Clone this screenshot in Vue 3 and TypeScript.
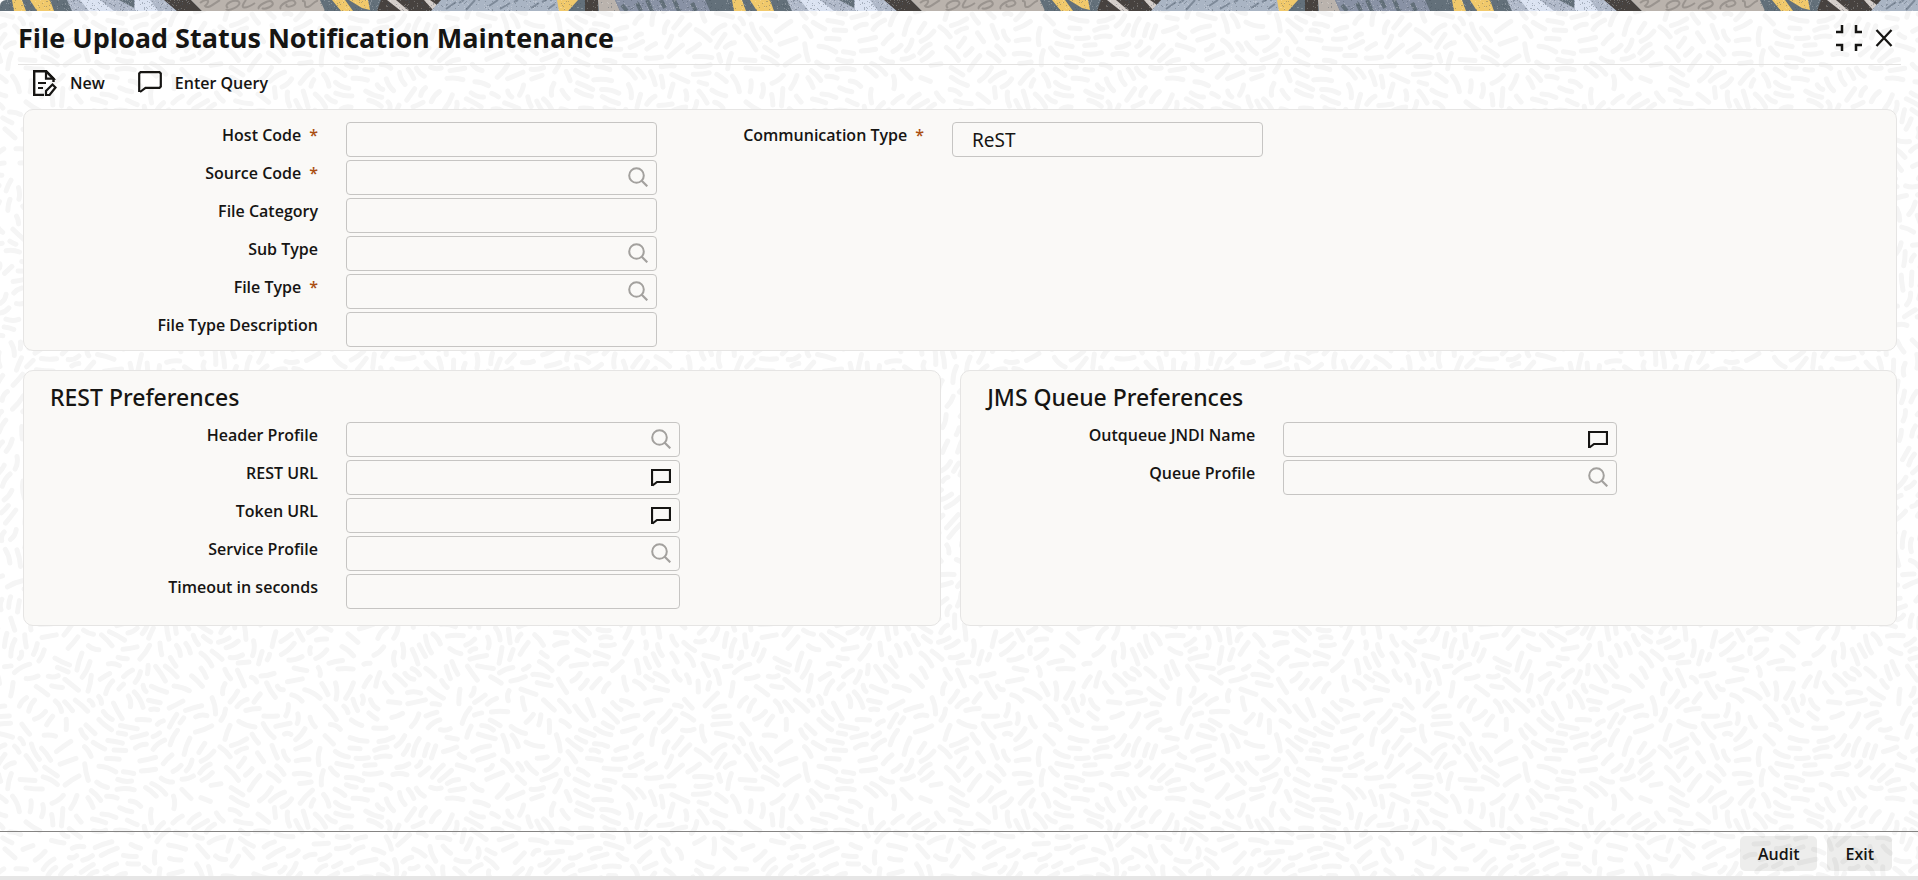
<script setup lang="ts">
import { ref } from 'vue'

type Icon = 'search' | 'comment' | null

interface Field {
  id: string
  label: string
  required?: boolean
  icon: Icon
}

const generalFields: Field[] = [
  { id: 'host-code', label: 'Host Code', required: true, icon: null },
  { id: 'source-code', label: 'Source Code', required: true, icon: 'search' },
  { id: 'file-category', label: 'File Category', icon: null },
  { id: 'sub-type', label: 'Sub Type', icon: 'search' },
  { id: 'file-type', label: 'File Type', required: true, icon: 'search' },
  { id: 'file-type-description', label: 'File Type Description', icon: null },
]

const communicationFields: Field[] = [
  { id: 'communication-type', label: 'Communication Type', required: true, icon: null },
]

const restFields: Field[] = [
  { id: 'header-profile', label: 'Header Profile', icon: 'search' },
  { id: 'rest-url', label: 'REST URL', icon: 'comment' },
  { id: 'token-url', label: 'Token URL', icon: 'comment' },
  { id: 'service-profile', label: 'Service Profile', icon: 'search' },
  { id: 'timeout', label: 'Timeout in seconds', icon: null },
]

const jmsFields: Field[] = [
  { id: 'outqueue', label: 'Outqueue JNDI Name', icon: 'comment' },
  { id: 'queue-profile', label: 'Queue Profile', icon: 'search' },
]

const headColumns: Field[][] = [generalFields, communicationFields]
const groups = [
  { title: 'REST Preferences', fields: restFields },
  { title: 'JMS Queue Preferences', fields: jmsFields },
]

const values = ref<Record<string, string>>({ 'communication-type': 'ReST' })

function random(seed: number): () => number {
  let s = seed
  return () => {
    s = (s * 1664525 + 1013904223) % 4294967296
    return s / 4294967296
  }
}

// Brush strokes following a periodic flow field, so that the tile repeats seamlessly.
// A stroke is dropped when it comes too close to one that is already placed.
const TILE = 720
const BUCKET = 8
const GAP = 7
function strokes(): string {
  const next = random(11)
  const cells = TILE / BUCKET
  const buckets = new Map<number, [number, number][]>()
  const wrap = (v: number, size: number): number => ((v % size) + size) % size
  const k = (2 * Math.PI) / TILE
  const parts: string[] = []
  const angleAt = (x: number, y: number): number =>
    1.3 * Math.sin(k * (3 * x + 2 * y)) +
    1.2 * Math.cos(k * (4 * y - 3 * x)) +
    0.9 * Math.sin(k * (6 * x - 3 * y) + 1) +
    1.1
  const isFree = (x: number, y: number): boolean => {
    const cx = Math.floor(x / BUCKET)
    const cy = Math.floor(y / BUCKET)
    for (let i = -1; i <= 1; i++) {
      for (let j = -1; j <= 1; j++) {
        const bucket = buckets.get(wrap(cx + i, cells) * cells + wrap(cy + j, cells))
        if (!bucket) continue
        for (const [px, py] of bucket) {
          const dx = Math.abs(px - x)
          const dy = Math.abs(py - y)
          if (Math.hypot(Math.min(dx, TILE - dx), Math.min(dy, TILE - dy)) < GAP) return false
        }
      }
    }
    return true
  }
  for (let n = 0; n < 50000; n++) {
    const x = next() * TILE
    const y = next() * TILE
    const a = angleAt(x, y) + (next() - 0.5) * 0.3
    const half = n < 30000 ? 5 + next() * 4 : 3 + next() * 2
    const bend = (next() - 0.5) * 5
    const dx = Math.cos(a) * half
    const dy = Math.sin(a) * half
    const points = [-1, -0.5, 0, 0.5, 1].map(
      (t): [number, number] => [wrap(x + dx * t, TILE), wrap(y + dy * t, TILE)],
    )
    if (!points.every(([px, py]) => isFree(px, py))) continue
    for (const point of points) {
      const key = Math.floor(point[0] / BUCKET) * cells + Math.floor(point[1] / BUCKET)
      const bucket = buckets.get(key)
      if (bucket) bucket.push(point)
      else buckets.set(key, [point])
    }
    const bx = -Math.sin(a) * bend
    const by = Math.cos(a) * bend
    const xs = x < 12 ? [x, x + TILE] : x > TILE - 12 ? [x, x - TILE] : [x]
    const ys = y < 12 ? [y, y + TILE] : y > TILE - 12 ? [y, y - TILE] : [y]
    for (const px of xs) {
      for (const py of ys) {
        parts.push(
          `M${(px - dx).toFixed(1)} ${(py - dy).toFixed(1)}q${(dx + bx).toFixed(1)} ${(dy + by).toFixed(1)} ${(2 * dx).toFixed(1)} ${(2 * dy).toFixed(1)}`,
        )
      }
    }
  }
  return parts.join('')
}

function speckles(seed: number, amount: number): string {
  const next = random(seed)
  let d = ''
  for (let i = 0; i < amount; i++) {
    let x = Math.floor(next() * 720)
    if (x > 190 && x < 320) x -= 130
    d += `M${x} ${Math.floor(next() * 11)}h1v1h-1z`
  }
  return d
}

const strokePath = strokes()
const darkSpeckles = speckles(5, 420)
const lightSpeckles = speckles(29, 420)
</script>

<template>
  <main class="screen">
    <svg class="texture" aria-hidden="true">
      <defs>
        <pattern id="strokes" width="720" height="720" patternUnits="userSpaceOnUse">
          <path :d="strokePath" fill="none" stroke="#f5f5f5" stroke-width="5" stroke-linecap="round" />
        </pattern>
      </defs>
      <rect width="100%" height="100%" fill="url(#strokes)" />
    </svg>

    <svg class="banner" aria-hidden="true">
      <defs>
        <pattern id="banner-art" width="720" height="11" patternUnits="userSpaceOnUse">
          <rect width="720" height="11" fill="#63707a" />
          <path d="M12 0H22L26 11H14ZM30 0H50L54 11H37ZM332 0H345L353 11H341ZM349 0H368L370 10L362 8ZM556 0H578L568 11H558Z" fill="#f1c96b" />
          <path d="M67 0H165L177 11H72Z" fill="#b0b9c9" />
          <path d="M80 0H100L114 11H89ZM135 0H150L158 11H135Z" fill="#dbe3f2" />
          <path d="M119 0H134V8Z" fill="#63707a" />
          <path d="M164 0H191L202 11H177ZM381 0H442L432 11H377ZM585 0H598V11H585Z" fill="#47423f" />
          <path d="M191 0H320L325 11H202ZM598 0H615L620 11H599Z" fill="#bab3ad" />
          <path d="M387 0H396L409 11H401ZM424 0H430L437 5L433 10Z" fill="#d3cdc9" />
          <path d="M441 0H557L559 11H431Z" fill="#aab5c4" />
          <path d="M615 0H705L710 11H620Z" fill="#8992a5" />
          <path d="M622 5L627 11M637 3L641 11M647 0L652 11M661 0L665 8M674 0L679 11M692 3L696 11" fill="none" stroke="#63707a" stroke-width="4" />
          <path
            d="M200 3C206 -2 212 0 205 6C208 10 216 2 220 0M228 8C222 4 236 -2 239 2C242 6 228 12 226 9M246 0C238 10 246 9 255 3M259 9C256 6 270 -1 272 2C276 6 264 10 262 8M281 9C277 6 292 -3 295 2C298 6 283 9 287 4M302 1C308 0 302 8 308 7C312 6 315 0 318 1"
            fill="none"
            stroke="#9a948f"
            stroke-width="2"
          />
          <path d="M446 9L456 2M464 0L459 3M466 10L475 0M489 6L498 0M500 9L510 3M514 2L518 0M531 8L539 3M546 0L542 2M548 9L555 4" stroke="#7e8a99" stroke-width="2" />
          <path :d="darkSpeckles" fill="#46535e" fill-opacity="0.35" />
          <path :d="lightSpeckles" fill="#ffffff" fill-opacity="0.22" />
        </pattern>
      </defs>
      <rect width="100%" height="11" fill="url(#banner-art)" />
    </svg>

    <header class="title-bar">
      <h1>File Upload Status Notification Maintenance</h1>
      <div class="window-actions">
        <button type="button" class="icon-button" aria-label="Restore">
          <svg width="26" height="26" viewBox="0 0 26 26">
            <path d="M0 7H6V0M20 0V7H26M0 20H6V26M20 26V20H26" fill="none" stroke="#161513" stroke-width="2.5" />
          </svg>
        </button>
        <button type="button" class="icon-button" aria-label="Close">
          <svg width="18" height="18" viewBox="0 0 18 18">
            <path d="M1.500 1L16.500 17M16.500 1L1.500 17" fill="none" stroke="#161513" stroke-width="2.3" />
          </svg>
        </button>
      </div>
    </header>

    <nav class="toolbar" aria-label="Actions">
      <button type="button" class="tool">
        <svg width="24" height="26" viewBox="0 0 24 26">
          <path d="M11 25H1.200V1.200H13L20.500 8.700V12" fill="none" stroke="#161513" stroke-width="2.400" />
          <path d="M13 1V8.700H20.500Z" fill="none" stroke="#161513" stroke-width="2.2" />
          <path d="M5 13H13M5 18H10" stroke="#161513" stroke-width="2" />
          <path d="M13 25V21L19.500 14.500L22.500 17.500L16.500 25Z" fill="none" stroke="#161513" stroke-width="2.2" />
        </svg>
        <span>New</span>
      </button>
      <button type="button" class="tool">
        <svg width="24" height="26" viewBox="0 0 24 26">
          <path d="M1.200 22V3.500L2.500 2.200H21.500L22.800 3.500V16.500L21.500 17.800H7.500L2 22" fill="none" stroke="#161513" stroke-width="2.2" />
        </svg>
        <span>Enter Query</span>
      </button>
    </nav>

    <div class="content">
      <section class="panel head-panel">
        <div v-for="(column, index) in headColumns" :key="index" class="head-column">
          <div v-for="field in column" :key="field.id" class="field">
            <label :for="field.id">{{ field.label }}<span v-if="field.required" class="star">*</span></label>
            <div class="control">
              <input :id="field.id" v-model="values[field.id]" type="text" :class="{ 'with-icon': field.icon }" />
              <button v-if="field.icon" type="button" class="lookup" :aria-label="'Look up ' + field.label">
                <svg width="20" height="20" viewBox="0 0 20 20">
                  <circle cx="8.500" cy="8.500" r="7.300" fill="none" stroke="#a3a19e" stroke-width="2" />
                  <path d="M13.500 13.500L19.300 19.300" stroke="#a3a19e" stroke-width="2.2" />
                </svg>
              </button>
            </div>
          </div>
        </div>
      </section>

      <div class="groups">
        <section v-for="group in groups" :key="group.title" class="panel group">
          <h2>{{ group.title }}</h2>
          <div v-for="field in group.fields" :key="field.id" class="field">
            <label :for="field.id">{{ field.label }}</label>
            <div class="control">
              <input :id="field.id" v-model="values[field.id]" type="text" :class="{ 'with-icon': field.icon }" />
              <button v-if="field.icon === 'search'" type="button" class="lookup" :aria-label="'Look up ' + field.label">
                <svg width="20" height="20" viewBox="0 0 20 20">
                  <circle cx="8.500" cy="8.500" r="7.300" fill="none" stroke="#a3a19e" stroke-width="2" />
                  <path d="M13.500 13.500L19.300 19.300" stroke="#a3a19e" stroke-width="2.2" />
                </svg>
              </button>
              <button v-else-if="field.icon === 'comment'" type="button" class="lookup" :aria-label="'Expand ' + field.label">
                <svg width="20" height="20" viewBox="0 0 20 20">
                  <path d="M1 19V3H19V15H6L1.500 18.500" fill="none" stroke="#161513" stroke-width="2.2" />
                </svg>
              </button>
            </div>
          </div>
        </section>
      </div>
    </div>

    <footer class="footer">
      <button type="button" class="action">Audit</button>
      <button type="button" class="action">Exit</button>
    </footer>
  </main>
</template>

<style>
body {
  background: #ffffff;
}
</style>

<style scoped>
.screen {
  position: relative;
  isolation: isolate;
  display: flex;
  flex-direction: column;
  min-height: 100vh;
  box-sizing: border-box;
  border-bottom: 4px solid #e6e6e6;
  color: #161513;
  font-family: "Open Sans", "Noto Sans", sans-serif;
  font-size: 16px;
  line-height: 24px;
}

.texture {
  position: absolute;
  inset: 0;
  z-index: -1;
  width: 100%;
  height: 100%;
}

.banner {
  display: block;
  flex: none;
  width: 100%;
  height: 11px;
  border-top-left-radius: 6px;
}

button {
  font: inherit;
  color: inherit;
  border: 0;
  padding: 0;
  background: none;
  cursor: pointer;
}

button svg {
  display: block;
}

.title-bar {
  display: flex;
  align-items: center;
  justify-content: space-between;
  height: 53px;
  margin: 0 17px 0 18px;
  border-bottom: 1px solid #e3e2e1;
}

h1 {
  margin: 0;
  font-size: 27px;
  line-height: 36px;
  font-weight: 700;
}

.window-actions {
  display: flex;
  align-items: center;
  gap: 13px;
  padding-right: 8px;
}

.toolbar {
  display: flex;
  align-items: center;
  gap: 33px;
  height: 36px;
  padding-left: 33px;
}

.tool {
  display: flex;
  align-items: center;
  gap: 13px;
  font-weight: 600;
}

.content {
  flex: 1;
  padding: 8px 21px 16px 23px;
}

.panel {
  box-sizing: border-box;
  border: 1px solid #e6e5e4;
  border-radius: 10px;
  background: #faf9f7;
}

.head-panel {
  display: grid;
  grid-template-columns: repeat(3, 1fr);
  padding: 12px 27px 3px 27px;
}

.groups {
  display: grid;
  grid-template-columns: 49fr 50fr;
  gap: 19px;
  margin-top: 19px;
}

.group {
  padding: 11px 26px;
  min-height: 256px;
}

h2 {
  margin: 0 0 10px;
  font-family: "Noto Sans", "Open Sans", sans-serif;
  font-size: 23px;
  line-height: 30px;
  font-weight: 500;
}

.field {
  display: grid;
  grid-template-columns: 268px 334px;
  column-gap: 28px;
  margin-bottom: 3px;
}

.head-column .field {
  grid-template-columns: 267fr 311fr;
}

.field:last-child {
  margin-bottom: 0;
}

label {
  padding-top: 1px;
  text-align: right;
  font-weight: 600;
}

.star {
  margin-left: 8px;
  color: #aa4f12;
}

.control {
  position: relative;
}

input {
  display: block;
  width: 100%;
  height: 35px;
  box-sizing: border-box;
  padding: 0 19px;
  border: 1px solid #c6c5c3;
  border-radius: 4px;
  background: transparent;
  color: inherit;
  font-family: "Noto Sans", "Open Sans", sans-serif;
  font-size: 19px;
}

.with-icon {
  padding-right: 40px;
}

.lookup {
  position: absolute;
  top: 7px;
  right: 9px;
}

.footer {
  display: flex;
  justify-content: flex-end;
  gap: 10px;
  padding: 4px 26px 5px 0;
  border-top: 1px solid #858483;
}

.action {
  height: 35px;
  padding: 0 18px;
  border-radius: 5px;
  background: rgba(22, 21, 19, 0.08);
  font-weight: 600;
}
</style>
